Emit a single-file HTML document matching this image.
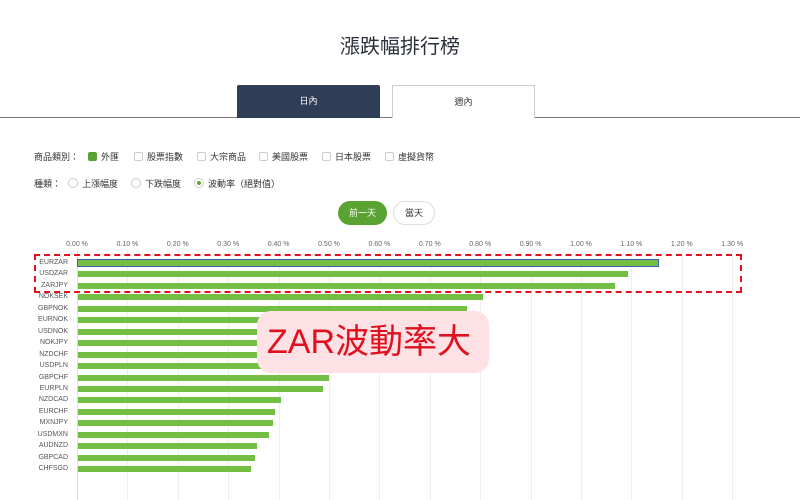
<!DOCTYPE html>
<html><head><meta charset="utf-8"><style>
*{margin:0;padding:0;box-sizing:border-box}
body{width:800px;height:500px;background:#fff;position:relative;overflow:hidden;font-family:"Liberation Sans","Noto Sans CJK TC",sans-serif;color:#333}
.a{position:absolute}
.t{font-size:9px;color:#333;white-space:nowrap}
.cb{display:inline-block;width:9px;height:9px;border:1px solid #ccc;border-radius:2px;vertical-align:-1px;margin-right:4px}
.rd{display:inline-block;width:10px;height:10px;border:1px solid #ccc;border-radius:50%;vertical-align:-1px;margin-right:4px;position:relative}
.lab{font-size:7px;color:#555;width:68px;text-align:right;left:0}
.bar{height:6px;background:#72bf44;left:78px}
.ax{font-size:7px;color:#666;top:241px;width:40px;text-align:center}
.g{top:250px;width:1px;height:250px;background:#eee}
</style></head><body>
<div class="a" style="left:0;top:30px;width:800px;text-align:center;font-size:20px;color:#2a2f3a">漲跌幅排行榜</div>
<div class="a" style="left:0;top:117px;width:800px;height:1px;background:#777"></div>
<div class="a" style="left:237px;top:85px;width:143px;height:33px;background:#2f3e56;color:#fff;font-size:9px;text-align:center;line-height:33px;border-radius:2px 2px 0 0">日內</div>
<div class="a" style="left:392px;top:85px;width:143px;height:33px;background:#fff;border:1px solid #ccc;border-bottom:none;font-size:9px;text-align:center;line-height:32px">週內</div>
<div class="a t" style="left:34px;top:150px">商品類別：</div>
<div class="a t" style="left:88px;top:150px"><span class="cb" style="background:#5aa332;border-color:#5aa332"></span>外匯</div>
<div class="a t" style="left:134px;top:150px"><span class="cb"></span>股票指數</div>
<div class="a t" style="left:197px;top:150px"><span class="cb"></span>大宗商品</div>
<div class="a t" style="left:259px;top:150px"><span class="cb"></span>美國股票</div>
<div class="a t" style="left:322px;top:150px"><span class="cb"></span>日本股票</div>
<div class="a t" style="left:385px;top:150px"><span class="cb"></span>虛擬貨幣</div>
<div class="a t" style="left:34px;top:177px">種類：</div>
<div class="a t" style="left:68px;top:177px"><span class="rd"></span>上漲幅度</div>
<div class="a t" style="left:131px;top:177px"><span class="rd"></span>下跌幅度</div>
<div class="a t" style="left:194px;top:177px"><span class="rd"><span class="a" style="left:2px;top:2px;width:4px;height:4px;border-radius:50%;background:#5aa332"></span></span>波動率（絕對值）</div>
<div class="a" style="left:338px;top:201px;width:49px;height:24px;border-radius:12px;background:#5aa332;color:#fff;font-size:9px;text-align:center;line-height:24px">前一天</div>
<div class="a" style="left:393px;top:201px;width:42px;height:24px;border-radius:12px;border:1px solid #ddd;font-size:9px;text-align:center;line-height:22px">當天</div>
<div id="chart"></div>
<script>
var c=document.getElementById('chart'),h='';
for(var i=0;i<=13;i++){var x=77+i*50.4;h+='<div class="a ax" style="left:'+(x-20)+'px">'+(i/10).toFixed(2)+' %</div>';if(i>0)h+='<div class="a g" style="left:'+x+'px"></div>';}
h+='<div class="a" style="left:77px;top:250px;width:1px;height:250px;background:#ddd"></div>';
var L=['EURZAR','USDZAR','ZARJPY','NOKSEK','GBPNOK','EURNOK','USDNOK','NOKJPY','NZDCHF','USDPLN','GBPCHF','EURPLN','NZDCAD','EURCHF','MXNJPY','USDMXN','AUDNZD','GBPCAD','CHFSGD'];
var E=[658,628,615,483,467,440,420,400,380,360,329,323,281,275,273,269,257,255,251];
for(var i=0;i<19;i++){var y=263+i*11.45;h+='<div class="a lab" style="top:'+(y-4)+'px">'+L[i]+'</div>';h+='<div class="a bar" style="top:'+(y-3)+'px;width:'+(E[i]-78)+'px'+(i==0?';outline:1px solid #3a62b0':'')+'"></div>';}
c.innerHTML=h;
</script>
<div class="a" style="left:34px;top:254px;width:708px;height:39px;border:2px dashed #e0101e"></div>
<div class="a" style="left:257px;top:311px;width:232px;height:62px;background:#fde1e4;border-radius:14px;color:#e0101e;font-size:34px;line-height:62px;padding-left:10px;white-space:nowrap">ZAR波動率大</div>
</body></html>
